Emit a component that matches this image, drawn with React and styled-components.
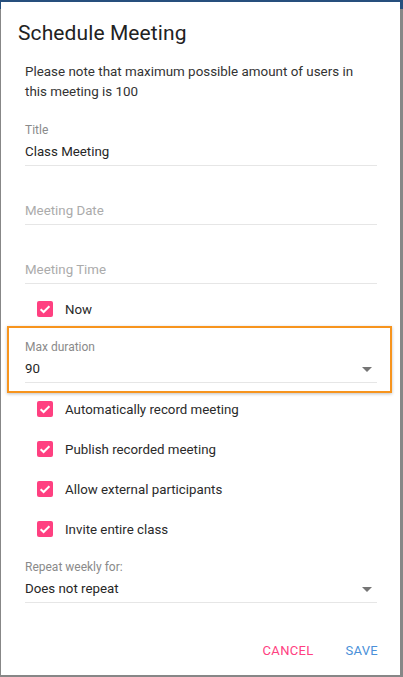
import styled, { createGlobalStyle } from 'styled-components'

const GlobalStyle = createGlobalStyle`
  html, body {
    margin: 0;
    padding: 0;
    background: #878787;
    font-family: Roboto, "Noto Sans", Arial, sans-serif;
  }
  * { box-sizing: border-box; }
`

const checks = [
  'Automatically record meeting',
  'Publish recorded meeting',
  'Allow external participants',
  'Invite entire class',
]

const ArrowDown = () => (
  <svg width="10" height="5" viewBox="0 0 10 5">
    <path d="M0 0 L10 0 L5 5 Z" fill="#757575" />
  </svg>
)

const CheckMark = () => (
  <svg width="16" height="16" viewBox="0 0 16 16">
    <path d="M3.6 8.2 L6.6 11 L12.4 5.2" stroke="#fff" strokeWidth="2" fill="none" />
  </svg>
)

const CheckRow = ({ label, gap }) => (
  <Row gap={gap}>
    <Box>
      <CheckMark />
    </Box>
    <RowLabel>{label}</RowLabel>
  </Row>
)

const App = () => {
  return (
    <Page>
      <GlobalStyle />
      <AppBar />
      <Dialog>
        <Heading>Schedule Meeting</Heading>
        <Form>
          <Note>
            Please note that maximum possible amount of users in this meeting is 100
          </Note>
          <Field space={21}>
            <Label>Title</Label>
            <Input>Class Meeting</Input>
          </Field>
          <Field>
            <Label />
            <Input empty>Meeting Date</Input>
          </Field>
          <Field>
            <Label />
            <Input empty>Meeting Time</Input>
          </Field>
          <CheckRow label="Now" gap={5} />
          <Field highlight space={11}>
            <Label>Max duration</Label>
            <Input>
              90
              <ArrowDown />
            </Input>
          </Field>
          {checks.map((c, i) => (
            <CheckRow key={c} label={c} gap={i === 0 ? 6 : 0} />
          ))}
          <Field space={11}>
            <Label>Repeat weekly for:</Label>
            <Input>
              Does not repeat
              <ArrowDown />
            </Input>
          </Field>
        </Form>
        <Actions>
          <Button color="#ff4081">Cancel</Button>
          <Button color="#4a90d9">Save</Button>
        </Actions>
      </Dialog>
    </Page>
  )
}

export default App

const Page = styled.div`
  position: relative;
  width: 403px;
  height: 677px;
  overflow: hidden;
  background: #878787;
`

const AppBar = styled.div`
  height: 9px;
  background: #264f7d;
`

const Dialog = styled.div`
  position: absolute;
  top: 2px;
  left: 1px;
  width: 399px;
  height: 673px;
  background: #fff;
  display: flex;
  flex-direction: column;
`

const Heading = styled.h2`
  margin: 0;
  padding: 17px 0 0 17px;
  font-size: 21px;
  line-height: 28px;
  font-weight: 400;
  color: #222;
  letter-spacing: 0.1px;
`

const Form = styled.div`
  display: flex;
  flex-direction: column;
  padding: 0 23px 0 24px;
`

const Note = styled.p`
  margin: 15px 0 0;
  font-size: 13.4px;
  line-height: 20px;
  color: #333;
`

const Field = styled.div`
  position: relative;
  display: flex;
  flex-direction: column;
  margin-top: ${p => p.space ?? 16}px;
  &::after {
    content: '';
    display: ${p => (p.highlight ? 'block' : 'none')};
    position: absolute;
    left: -18px;
    right: -15px;
    top: -14px;
    bottom: -10px;
    border: 2px solid #f7941d;
    box-shadow: 0 1px 3px rgba(0, 0, 0, 0.25);
    pointer-events: none;
  }
`

const Label = styled.div`
  height: 14px;
  font-size: 12px;
  line-height: 14px;
  color: #8a8a8a;
`

const Input = styled.div`
  display: flex;
  align-items: center;
  justify-content: space-between;
  margin-top: 5px;
  height: 24px;
  padding-bottom: 3px;
  border-bottom: 1px solid #e6e6e6;
  font-size: 13.3px;
  line-height: 20px;
  color: ${p => (p.empty ? '#ababab' : '#262626')};
  & > svg {
    margin-right: 5px;
  }
`

const Row = styled.div`
  display: flex;
  align-items: center;
  height: 40px;
  padding-left: 12px;
  margin-top: ${p => p.gap || 0}px;
`

const Box = styled.div`
  width: 16px;
  height: 16px;
  border-radius: 2px;
  background: #ff4081;
  display: flex;
`

const RowLabel = styled.span`
  margin-left: 12px;
  font-size: 13.3px;
  color: #2a2a2a;
`

const Actions = styled.div`
  display: flex;
  justify-content: flex-end;
  gap: 32px;
  padding: 38px 22px 0 0;
`

const Button = styled.span`
  font-size: 13px;
  line-height: 20px;
  text-transform: uppercase;
  color: ${p => p.color};
  letter-spacing: 0.3px;
`
